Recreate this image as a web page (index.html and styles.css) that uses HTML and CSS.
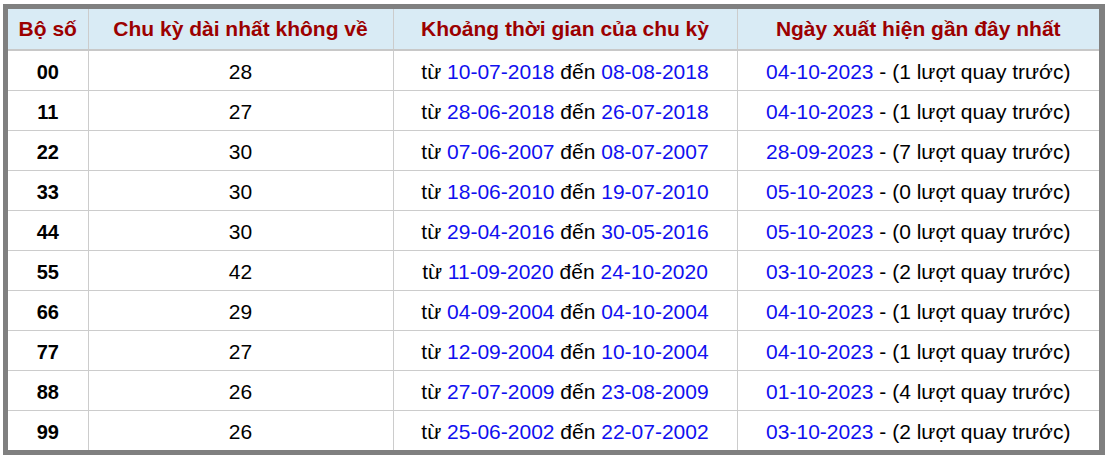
FILE: index.html
```html
<!DOCTYPE html>
<html lang="vi">
<head>
<meta charset="utf-8">
<title>Chu kỳ dài nhất</title>
<link rel="stylesheet" href="styles.css">
</head>
<body>
<div class="frame">
<table class="stats">
<colgroup>
<col class="c1"><col class="c2"><col class="c3"><col class="c4">
</colgroup>
<thead>
<tr><th>Bộ số</th><th>Chu kỳ dài nhất không về</th><th>Khoảng thời gian của chu kỳ</th><th>Ngày xuất hiện gần đây nhất</th></tr>
</thead>
<tbody>
<tr><td class="num">00</td><td>28</td><td>từ <span class="d">10-07-2018</span> đến <span class="d">08-08-2018</span></td><td><span class="d">04-10-2023</span> - (1 lượt quay trước)</td></tr>
<tr><td class="num">11</td><td>27</td><td>từ <span class="d">28-06-2018</span> đến <span class="d">26-07-2018</span></td><td><span class="d">04-10-2023</span> - (1 lượt quay trước)</td></tr>
<tr><td class="num">22</td><td>30</td><td>từ <span class="d">07-06-2007</span> đến <span class="d">08-07-2007</span></td><td><span class="d">28-09-2023</span> - (7 lượt quay trước)</td></tr>
<tr><td class="num">33</td><td>30</td><td>từ <span class="d">18-06-2010</span> đến <span class="d">19-07-2010</span></td><td><span class="d">05-10-2023</span> - (0 lượt quay trước)</td></tr>
<tr><td class="num">44</td><td>30</td><td>từ <span class="d">29-04-2016</span> đến <span class="d">30-05-2016</span></td><td><span class="d">05-10-2023</span> - (0 lượt quay trước)</td></tr>
<tr><td class="num">55</td><td>42</td><td>từ <span class="d">11-09-2020</span> đến <span class="d">24-10-2020</span></td><td><span class="d">03-10-2023</span> - (2 lượt quay trước)</td></tr>
<tr><td class="num">66</td><td>29</td><td>từ <span class="d">04-09-2004</span> đến <span class="d">04-10-2004</span></td><td><span class="d">04-10-2023</span> - (1 lượt quay trước)</td></tr>
<tr><td class="num">77</td><td>27</td><td>từ <span class="d">12-09-2004</span> đến <span class="d">10-10-2004</span></td><td><span class="d">04-10-2023</span> - (1 lượt quay trước)</td></tr>
<tr><td class="num">88</td><td>26</td><td>từ <span class="d">27-07-2009</span> đến <span class="d">23-08-2009</span></td><td><span class="d">01-10-2023</span> - (4 lượt quay trước)</td></tr>
<tr><td class="num">99</td><td>26</td><td>từ <span class="d">25-06-2002</span> đến <span class="d">22-07-2002</span></td><td><span class="d">03-10-2023</span> - (2 lượt quay trước)</td></tr>
</tbody>
</table>
</div>
</body>
</html>
```
FILE: styles.css
```css
html, body {
  background: #fff;
}
body {
  margin: 4px 4px 0 3px;
  font-family: "Liberation Sans", Arial, sans-serif;
  color: #000;
}
.frame {
  width: 1091px;
  border: 5px solid #808080;
  border-right-width: 6px;
}
.stats {
  width: 100%;
  border-collapse: collapse;
  border-style: hidden;
  table-layout: fixed;
}
.c1 { width: 80px; }
.c2 { width: 305px; }
.c3 { width: 344px; }
.c4 { width: 362px; }
.stats th {
  height: 40px;
  padding: 0;
  background: #d9ebf5;
  color: #9c0000;
  font-size: 21px;
  font-weight: bold;
  text-align: center;
  vertical-align: middle;
  border-left: 1px solid #cccccc;
  border-right: 1px solid #cccccc;
  border-bottom: 2px solid #c8c8c8;
}
.stats td {
  height: 37px;
  padding: 2px 0 0;
  font-size: 21px;
  line-height: 24px;
  text-align: center;
  vertical-align: middle;
  border: 1px solid #cccccc;
  white-space: nowrap;
}
.stats td.num {
  font-weight: bold;
  font-size: 20px;
}
.d {
  color: #1010f0;
}
```
